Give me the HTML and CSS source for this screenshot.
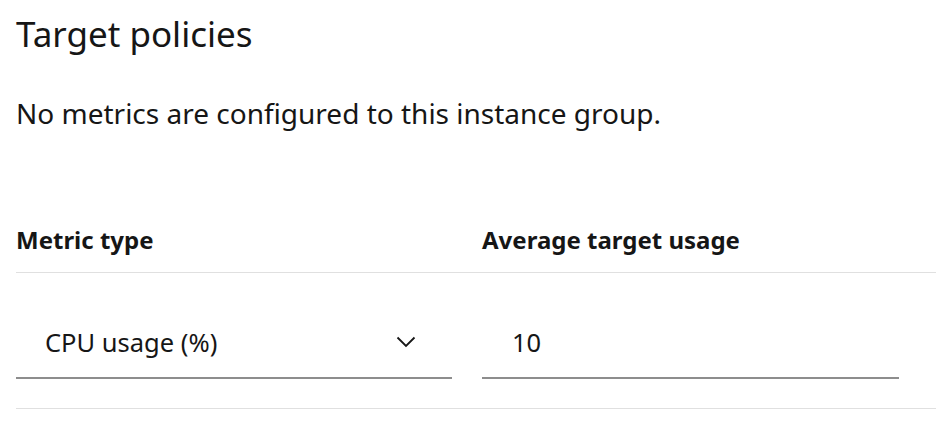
FILE: index.html
```html
<!DOCTYPE html>
<html lang="en">
<head>
<meta charset="utf-8">
<title>Target policies</title>
<link rel="stylesheet" href="styles.css">
</head>
<body>
<main class="page">
  <h2 class="title">Target policies</h2>
  <p class="note">No metrics are configured to this instance group.</p>
  <div class="table">
    <div class="row head">
      <div class="cell c1">Metric type</div>
      <div class="cell c2">Average target usage</div>
    </div>
    <div class="row body">
      <div class="cell c1">
        <div class="select">
          <span class="select-text">CPU usage (%)</span>
          <svg class="chev" width="20" height="12" viewBox="0 0 20 12" aria-hidden="true">
            <path d="M1.5 1.5 L10 10 L18.5 1.5" fill="none" stroke="#161616" stroke-width="1.8"/>
          </svg>
        </div>
      </div>
      <div class="cell c2">
        <div class="input">10</div>
      </div>
    </div>
  </div>
</main>
</body>
</html>
```

FILE: styles.css
```css
html, body {
  margin: 0;
  padding: 0;
  background: #ffffff;
}
body {
  font-family: "Noto Sans", "Open Sans", sans-serif;
  color: #161616;
  overflow: hidden;
}
.page {
  padding: 12px 0 0 16px;
}
.title {
  margin: 0;
  font-size: 35px;
  line-height: 44px;
  font-weight: 400;
}
.note {
  margin: 39px 0 0;
  font-size: 28px;
  line-height: 36px;
}
.table {
  margin-top: 93px;
}
.row {
  display: grid;
  grid-template-columns: 466px 454px;
  border-bottom: 1px solid #e0e0e0;
}
.head .cell {
  font-size: 24px;
  line-height: 32px;
  font-weight: 700;
  padding-bottom: 16px;
}
.body .cell {
  padding: 34px 0 29px;
}
.select {
  width: 436px;
  height: 70px;
  border-bottom: 2px solid #8d8d8d;
  display: flex;
  align-items: center;
  justify-content: space-between;
}
.select-text {
  font-size: 25.5px;
  line-height: 32px;
  padding-left: 29px;
}
.chev {
  margin-right: 36px;
}
.input {
  width: 387px;
  height: 70px;
  border-bottom: 2px solid #8d8d8d;
  padding-left: 30px;
  font-size: 25.5px;
  line-height: 70px;
}
```
